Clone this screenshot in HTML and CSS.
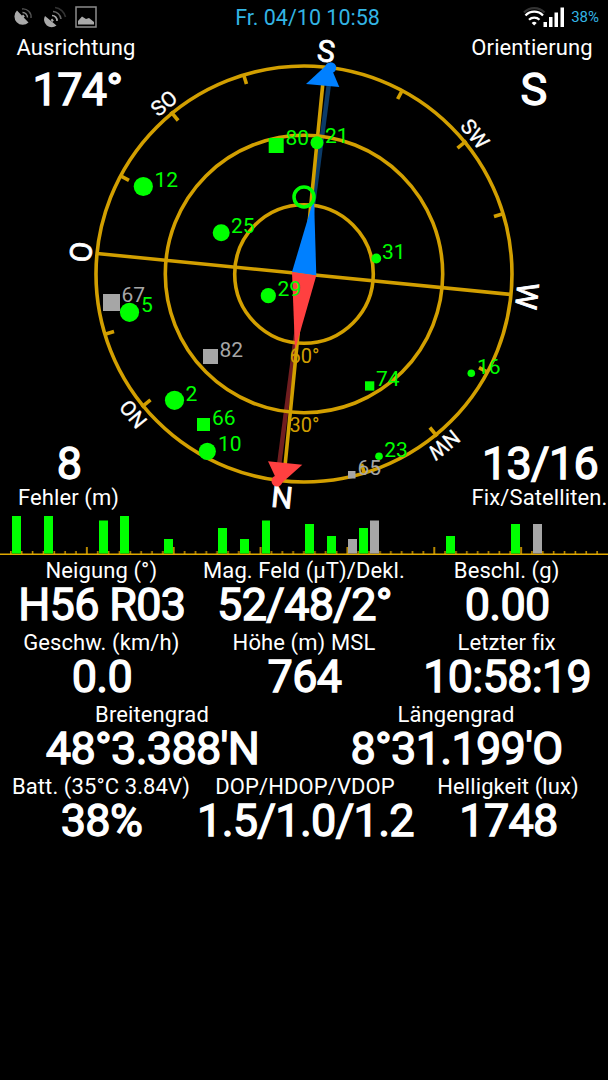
FILE: index.html
```html
<!DOCTYPE html>
<html lang="de">
<head>
  <meta charset="UTF-8" />
  <meta name="viewport" content="width=device-width, initial-scale=1.0" />
  <title>GPS Status</title>
  <link rel="stylesheet" href="styles.css">
</head>
<body>

  <!-- Status bar -->
  <header class="statusbar">
    <div class="status-left">
      <svg class="dish-small" width="20" height="20" viewBox="0 0 20 20">
        <path d="M3 3.500 L14.500 15.500 A8 8 0 0 1 3 3.500Z" fill="#aaa" />
        <path d="M8.500 10L10 8.500" stroke="#aaa" stroke-width="2.500" />
        <path d="M8.500 5.500 A4.800 4.800 0 0 1 13.500 10.500" fill="none" stroke="#888" stroke-width="1.400" />
        <path d="M8 2 A8 8 0 0 1 17 11" fill="none" stroke="#555" stroke-width="1.400" />
      </svg>
      <svg width="24" height="24" viewBox="0 0 24 24">
        <path d="M2 11 L13.500 20.500 A7.600 7.600 0 0 1 2 11Z" fill="#aaa" />
        <path d="M8.500 16L10 14.500" stroke="#aaa" stroke-width="2.500" />
        <path d="M9 10.500 A5 5 0 0 1 14 16" fill="none" stroke="#aaa" stroke-width="1.600" />
        <path d="M10 6.500 A8.500 8.500 0 0 1 18 14" fill="none" stroke="#666" stroke-width="1.600" />
        <path d="M12 2.500 A12 12 0 0 1 22.500 12" fill="none" stroke="#333" stroke-width="1.600" />
      </svg>
      <svg width="22" height="22" viewBox="0 0 22 22">
        <rect x="1" y="1" width="20" height="20" fill="none" stroke="#8c8c8c" stroke-width="1.500" />
        <path d="M3 18.500V15L7 10.500L11 13L14 12L19 16V18.500Z" fill="#aaa" />
      </svg>
    </div>
    <div class="clock">Fr. 04/10 10:58</div>
    <div class="status-right">
      <svg width="42" height="22" viewBox="0 0 42 22">
        <g fill="none" stroke="#fff" stroke-width="2.300">
          <path d="M1 6.500 A14 14 0 0 1 21.500 6.500" stroke="#333" />
          <path d="M2.500 9.500 A12 12 0 0 1 20 9.500" />
          <path d="M6 13.800 A7.500 7.500 0 0 1 16.500 13.800" />
        </g>
        <path d="M8.700 17 Q11.200 14.700 13.700 17 L11.200 19.500Z" fill="#fff" />
        <path d="M20.500 16h3.500v5h-3.500z M26 11h3.500v10h-3.500z M31.500 6.500h3.500v14.500h-3.500z M37.500 1.500h3.500v19.500h-3.500z" fill="#fff" />
      </svg>
      <span class="battery">38%</span>
    </div>
  </header>

  <!-- Compass and satellites -->
  <section class="dial">
    <svg class="compass" width="608" height="480" viewBox="0 34 608 480">
      <!-- needle shafts -->
      <path d="M304 274L331 68" stroke="#0b3b68" stroke-width="4.500" />
      <path d="M304 274L277 481" stroke="#701d1f" stroke-width="4.500" />

      <!-- rings and axes -->
      <g fill="none" stroke="#d29f00" stroke-width="3.600">
        <circle cx="304" cy="274" r="208" />
        <circle cx="304" cy="274" r="138.700" />
        <circle cx="304" cy="274" r="69.300" />
        <g transform="translate(304 274) rotate(5.650)">
          <path d="M0 -208V208M-208 0H208" />
          <g id="ticks">
            <path d="M0 -208V-198.500" transform="rotate(22.500)" />
            <path d="M0 -210V-198.500" transform="rotate(45)" />
            <path d="M0 -208V-198.500" transform="rotate(67.500)" />
          </g>
          <use href="#ticks" transform="rotate(90)" />
          <use href="#ticks" transform="rotate(180)" />
          <use href="#ticks" transform="rotate(270)" />
        </g>
      </g>

      <!-- cardinal points -->
      <g class="cardinals" transform="translate(304 274) rotate(5.650)">
        <text y="-213.500">S</text>
        <text y="-213.500" transform="rotate(90)">W</text>
        <text y="-213.500" transform="rotate(180)">N</text>
        <text y="-213.500" transform="rotate(270)">O</text>
        <g class="minor">
          <text y="-213.500" transform="rotate(45)">SW</text>
          <text y="-213.500" transform="rotate(135)">NW</text>
          <text y="-213.500" transform="rotate(225)">NO</text>
          <text y="-213.500" transform="rotate(315)">SO</text>
        </g>
      </g>

      <!-- needle -->
      <g fill="#0080ff">
        <path d="M292 272L316.300 275.600L314 198Z" />
        <path d="M306 84L339.300 87L329 62.700Z" />
        <circle cx="330.700" cy="67.700" r="5.500" />
      </g>
      <g fill="#ff4040">
        <path d="M292 272L316.300 275.600L295 350Z" />
        <path d="M268 461.300L302.300 464.700L279.200 485.300Z" />
        <circle cx="277" cy="481" r="5.500" />
      </g>

      <g class="elevation">
        <text x="304.500" y="363.300">60°</text>
        <text x="304.500" y="432.300">30°</text>
      </g>

      <!-- satellites in use -->
      <circle cx="304" cy="197" r="10" fill="none" stroke="#0f0" stroke-width="3.500" />
      <g class="sat">
        <rect x="268.700" y="138" width="15" height="15" /><text x="285.500" y="145.300">80</text>
        <circle cx="317" cy="142.700" r="6.500" /><text x="325" y="142.700">21</text>
        <circle cx="143.300" cy="186.500" r="9.600" /><text x="154.500" y="186.700">12</text>
        <circle cx="221.200" cy="232.700" r="8.500" /><text x="231" y="233">25</text>
        <circle cx="376.300" cy="258.500" r="4.900" /><text x="382" y="258.500">31</text>
        <circle cx="268.300" cy="295.700" r="7.600" /><text x="277.500" y="296.300">29</text>
        <circle cx="174.500" cy="400.300" r="9.600" /><text x="185.500" y="400.600">2</text>
        <rect x="197" y="418" width="13" height="13" /><text x="212" y="424.500">66</text>
        <circle cx="207.300" cy="451.300" r="8.600" /><text x="218" y="451">10</text>
        <rect x="365" y="381.300" width="9.300" height="9.300" /><text x="376" y="386.300">74</text>
        <circle cx="379" cy="456.300" r="3.800" /><text x="384.300" y="456.500">23</text>
        <circle cx="471.300" cy="373.300" r="3.800" /><text x="477" y="374">16</text>
      </g>
      <!-- satellites visible only -->
      <g class="sat idle">
        <rect x="103" y="294" width="17" height="17" /><text x="121.500" y="302">67</text>
        <rect x="203" y="349" width="15" height="15" /><text x="219.500" y="357">82</text>
        <rect x="348" y="471" width="7.500" height="7.500" /><text x="357.500" y="475">65</text>
      </g>
      <g class="sat">
        <circle cx="129.500" cy="312.300" r="9.600" /><text x="141" y="312">5</text>
      </g>
    </svg>

    <div class="readout top left">
      <div class="label">Ausrichtung</div>
      <div class="value">174°</div>
    </div>
    <div class="readout top right">
      <div class="label">Orientierung</div>
      <div class="value">S</div>
    </div>
    <div class="readout bottom left">
      <div class="value">8</div>
      <div class="label">Fehler (m)</div>
    </div>
    <div class="readout bottom right">
      <div class="value">13/16</div>
      <div class="label">Fix/Satelliten.</div>
    </div>
  </section>

  <!-- Signal strength -->
  <svg class="signal" width="608" height="42" viewBox="0 514 608 42">
    <defs>
      <pattern id="scale" x="0" y="514" width="86.857" height="42" patternUnits="userSpaceOnUse">
        <path d="M10.857 37v4M21.714 37v4M32.571 37v4M43.429 37v4M54.286 37v4M65.143 37v4M76 37v4" stroke="#c08f00" stroke-width="1.600" />
        <path d="M0.300 33v8M86.557 33v8" stroke="#c08f00" stroke-width="1.300" />
      </pattern>
    </defs>
    <rect x="5" y="514" width="600" height="42" fill="url(#scale)" />
    <path d="M0 554.300H608" stroke="#e0a800" stroke-width="1.400" />
    <path fill="#0f0" d="M12 516h9v37.500h-9z M44 516h9v37.500h-9z M99 520.500h9v33h-9z M120 516h9v37.500h-9z M164 539h9v14.500h-9z M218 528h9v25.500h-9z M240 539h9v14.500h-9z M262 520.500h8v33h-8z M305 524h9v29.500h-9z M327 536h9v17.500h-9z M359 528h9v25.500h-9z M446 536h9v17.500h-9z M511 524h9v29.500h-9z" />
    <path fill="#a6a6a6" d="M348 539h9v14.500h-9z M370 520.500h9v33h-9z M533 524h9v29.500h-9z" />
  </svg>

  <!-- Sensor values -->
  <main class="panel">
    <div class="row">
      <div class="readout"><div class="label">Neigung (°)</div><div class="value">H56 R03</div></div>
      <div class="readout"><div class="label">Mag. Feld (µT)/Dekl.</div><div class="value">52/48/2°</div></div>
      <div class="readout"><div class="label">Beschl. (g)</div><div class="value">0.00</div></div>
    </div>
    <div class="row">
      <div class="readout"><div class="label">Geschw. (km/h)</div><div class="value">0.0</div></div>
      <div class="readout"><div class="label">Höhe (m) MSL</div><div class="value">764</div></div>
      <div class="readout"><div class="label">Letzter fix</div><div class="value">10:58:19</div></div>
    </div>
    <div class="row">
      <div class="readout"><div class="label">Breitengrad</div><div class="value">48°3.388'N</div></div>
      <div class="readout"><div class="label">Längengrad</div><div class="value">8°31.199'O</div></div>
    </div>
    <div class="row wide-mid">
      <div class="readout"><div class="label">Batt. (35°C 3.84V)</div><div class="value">38%</div></div>
      <div class="readout"><div class="label">DOP/HDOP/VDOP</div><div class="value">1.5/1.0/1.2</div></div>
      <div class="readout"><div class="label">Helligkeit (lux)</div><div class="value">1748</div></div>
    </div>
  </main>

</body>
</html>
```
FILE: styles.css
```css
* { margin: 0; padding: 0; box-sizing: border-box; }
body {
  width: 608px;
  min-height: 1080px;
  background: #000;
  color: #fff;
  font-family: Roboto, "Liberation Sans", sans-serif;
  overflow-x: hidden;
}
svg { display: block; }

.statusbar {
  display: grid;
  grid-template-columns: 1fr auto 1fr;
  align-items: center;
  height: 34px;
  padding: 0 9px 0 14px;
  color: #33b5e5;
}
.status-left {
  display: flex;
  align-items: center;
  gap: 8px;
}
.dish-small { margin-right: 1px; }
.status-right {
  display: flex;
  align-items: center;
  justify-content: flex-end;
  gap: 6px;
}
.clock {
  font-size: 21.5px;
  padding-left: 2px;
}
.battery { font-size: 15px; }

.dial {
  display: grid;
  height: 480px;
}
.dial > * { grid-area: 1 / 1; }
.cardinals {
  fill: #fff;
  stroke: #fff;
  stroke-width: 0.8px;
  font-size: 30px;
  text-anchor: middle;
}
.minor {
  font-size: 21px;
  stroke-width: 0.3px;
}
.elevation {
  fill: #d29f00;
  font-size: 20px;
  text-anchor: middle;
}
.sat {
  fill: #0f0;
  font-size: 21px;
}
.idle { fill: #a6a6a6; }

.readout { text-align: center; }
.label {
  font-size: 22px;
  line-height: 27px;
  letter-spacing: 0.1px;
  white-space: nowrap;
}
.value {
  font-size: 45px;
  line-height: 41px;
  letter-spacing: -0.7px;
  padding-left: 1px;
  -webkit-text-stroke: 1.3px #fff;
  white-space: nowrap;
}
.top {
  width: 152px;
  align-self: start;
}
.top .value {
  margin-top: 8px;
  padding-left: 3px;
}
.bottom {
  width: 137px;
  align-self: end;
  padding-bottom: 3px;
}
.left { justify-self: start; }
.right { justify-self: end; }

.panel { padding-top: 1px; }
.row {
  display: grid;
  grid-auto-flow: column;
  grid-auto-columns: minmax(0, 1fr);
  height: 72px;
}
/* the DOP value is wider than a third of the screen */
.wide-mid {
  grid-template-columns: 202px 206px 200px;
}
.wide-mid .value { margin: 0 -10px; }
```
